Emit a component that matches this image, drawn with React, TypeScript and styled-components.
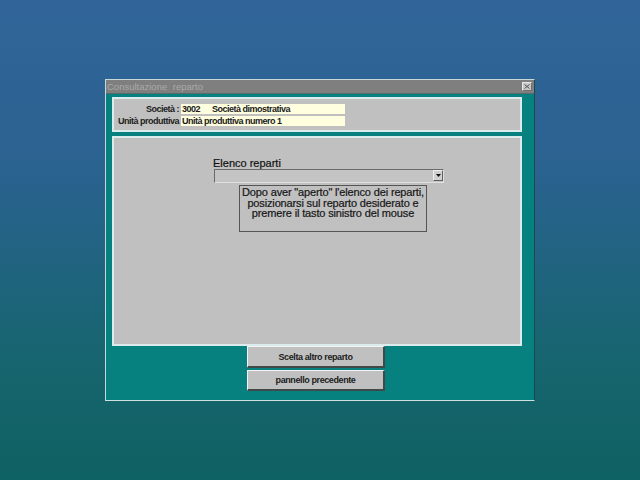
import React from 'react';
import styled, { createGlobalStyle } from 'styled-components';

const GlobalStyle = createGlobalStyle`
  html, body {
    margin: 0;
    padding: 0;
  }
  body {
    font-family: "Liberation Sans", Arial, sans-serif;
  }
`;

const Desktop = styled.div`
  width: 640px;
  height: 480px;
  box-sizing: border-box;
  padding: 79px 0 0 105px;
  background: linear-gradient(180deg, #316599 0%, #2a6290 35%, #17656f 75%, #0e6162 100%);
  overflow: hidden;
`;

const Window = styled.div`
  width: 430px;
  height: 322px;
  box-sizing: border-box;
  display: flex;
  flex-direction: column;
  background: #078080;
  border-left: 1px solid #c8d8d8;
  border-top: 1px solid #c8d8d8;
  border-right: 1px solid #1a4a4a;
  border-bottom: 1px solid #d0e0e0;
`;

const TitleBar = styled.div`
  height: 13px;
  flex: none;
  display: flex;
  align-items: center;
  justify-content: space-between;
  background: #7f7f7f;
  padding: 0 2px 0 1px;
  border-bottom: 1px solid #5a6a6a;
`;

const Title = styled.span`
  font-size: 9.5px;
  color: #aaaaaa;
  word-spacing: 3px;
`;

const CloseBox = styled.div`
  width: 10px;
  height: 9px;
  box-sizing: border-box;
  background: #c8c8c8;
  border: 1px solid #e8e8e8;
  border-right-color: #707070;
  border-bottom-color: #707070;
  display: flex;
  align-items: center;
  justify-content: center;
`;

const Body = styled.div`
  flex: 1;
  display: flex;
  flex-direction: column;
  padding: 3px 12px 0 6px;
  gap: 4px;
`;

const Panel = styled.div<{ h: number }>`
  height: ${(p) => p.h}px;
  box-sizing: border-box;
  background: #c0c0c0;
  border: 2px solid #dcecec;
`;

const InfoGrid = styled.div`
  display: grid;
  grid-template-columns: 65px 164px;
  column-gap: 2px;
  row-gap: 2px;
  padding: 5px 0 0 0;
`;

const Label = styled.div`
  font-size: 9px;
  font-weight: bold;
  color: #202020;
  text-align: right;
  height: 10px;
  line-height: 10px;
  letter-spacing: -0.5px;
  white-space: nowrap;
`;

const Field = styled.div`
  height: 10px;
  line-height: 10px;
  background: #ffffe0;
  font-size: 9px;
  font-weight: bold;
  color: #202020;
  padding-left: 1px;
  letter-spacing: -0.5px;
  white-space: pre;
`;

const MainContent = styled.div`
  display: flex;
  flex-direction: column;
  padding: 19px 0 0 99px;
`;

const ComboLabel = styled.div`
  font-size: 11px;
  color: #101010;
  line-height: 12px;
  height: 12px;
  -webkit-text-stroke: 0.2px #101010;
`;

const Combo = styled.div`
  width: 230px;
  height: 14px;
  box-sizing: border-box;
  margin-left: 1px;
  background: #c4c4c4;
  border: 1px solid #6a6a6a;
  border-right-color: #e0e0e0;
  border-bottom-color: #e0e0e0;
  display: flex;
  justify-content: flex-end;
`;

const ComboArrow = styled.div`
  width: 10px;
  height: 11px;
  box-sizing: border-box;
  background: #d0d0d0;
  border: 1px solid #f0f0f0;
  border-right-color: #606060;
  border-bottom-color: #606060;
  display: flex;
  align-items: center;
  justify-content: center;
`;

const HelpBox = styled.div`
  width: 188px;
  height: 47px;
  box-sizing: border-box;
  margin: 2px 0 0 26px;
  border: 1px solid #555;
  text-align: center;
  font-size: 11px;
  line-height: 10.7px;
  color: #151515;
  padding-top: 1px;
  letter-spacing: -0.15px;
  -webkit-text-stroke: 0.2px #151515;
  white-space: nowrap;
`;

const ButtonStack = styled.div`
  display: flex;
  flex-direction: column;
  gap: 2px;
  padding-left: 135px;
  margin-top: -4px;
`;

const Button = styled.div<{ h: number }>`
  width: 138px;
  height: ${(p) => p.h}px;
  box-sizing: border-box;
  background: #c0c0c0;
  border-top: 1px solid #f4f4f4;
  border-left: 1px solid #f4f4f4;
  border-right: 2px solid #404848;
  border-bottom: 2px solid #404848;
  display: flex;
  align-items: center;
  justify-content: center;
  font-size: 9px;
  font-weight: bold;
  letter-spacing: -0.4px;
  color: #202020;
`;

export default function App() {
  return (
    <>
      <GlobalStyle />
      <Desktop>
        <Window>
          <TitleBar>
            <Title>Consultazione reparto</Title>
            <CloseBox>
              <svg width="6" height="5" viewBox="0 0 6 5">
                <path d="M0.5 0.5 L5.5 4.5 M5.5 0.5 L0.5 4.5" stroke="#555" strokeWidth="1" />
              </svg>
            </CloseBox>
          </TitleBar>
          <Body>
            <Panel h={35}>
              <InfoGrid>
                <Label>Società :</Label>
                <Field>{'3002      Società dimostrativa'}</Field>
                <Label>Unità produttiva</Label>
                <Field>Unità produttiva numero 1</Field>
              </InfoGrid>
            </Panel>
            <Panel h={210}>
              <MainContent>
                <ComboLabel>Elenco reparti</ComboLabel>
                <Combo>
                  <ComboArrow>
                    <svg width="5" height="3" viewBox="0 0 5 3">
                      <path d="M0 0 L5 0 L2.5 3 Z" fill="#111" />
                    </svg>
                  </ComboArrow>
                </Combo>
                <HelpBox>
                  Dopo aver "aperto" l'elenco dei reparti,
                  <br />
                  posizionarsi sul reparto desiderato e
                  <br />
                  premere il tasto sinistro del mouse
                </HelpBox>
              </MainContent>
            </Panel>
            <ButtonStack>
              <Button h={22}>Scelta altro reparto</Button>
              <Button h={21}>pannello precedente</Button>
            </ButtonStack>
          </Body>
        </Window>
      </Desktop>
    </>
  );
}
